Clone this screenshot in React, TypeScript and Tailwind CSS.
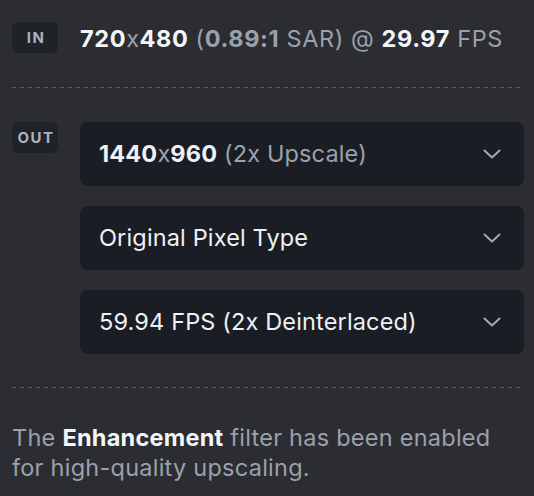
import React from 'react';

const Chevron: React.FC = () => (
    <svg width="18" height="10" viewBox="0 0 18 10" fill="none" className="shrink-0">
        <polyline points="1.5,1.5 9,8.5 16.5,1.5" stroke="#a4a9b2" strokeWidth="2" strokeLinecap="round" strokeLinejoin="round" />
    </svg>
);

const Badge: React.FC<{ label: string }> = ({ label }) => (
    <div className="w-[46px] h-[31px] shrink-0 rounded-md bg-[#1f2329] flex items-center justify-center text-[15px] leading-none font-bold tracking-[0.1em] text-[#a9b3bf] pl-[2px]">
        {label}
    </div>
);

const Divider: React.FC = () => (
    <div className="h-px w-[508px] bg-[linear-gradient(to_right,#5c5f67_50%,transparent_50%)] bg-[length:8px_1px]" />
);

const Select: React.FC<{ children: React.ReactNode }> = ({ children }) => (
    <div className="h-[64px] rounded-lg bg-[#1b1d24] flex items-center justify-between pl-[19px] pr-[23px] text-[23.5px] leading-none tracking-[0.15px] text-[#eef2f6]">
        <span>{children}</span>
        <Chevron />
    </div>
);

export default function App() {
    return (
        <div className="w-[534px] h-[496px] bg-[#2c2d32] pl-3 pr-[10px] pt-[22px] font-['Inter',sans-serif] antialiased">
            {/* Input */}
            <div className="flex items-center h-[31px]">
                <Badge label="IN" />
                <div className="ml-[22px] text-[23.5px] leading-none tracking-[0.6px] text-[#9aa1ab] pt-[3px] whitespace-nowrap">
                    <span className="font-bold text-[#f3f6f9]">720</span>x<span className="font-bold text-[#f3f6f9]">480</span> (<span className="font-bold">0.89:1</span> SAR) @ <span className="font-bold text-[#f3f6f9]">29.97</span> FPS
                </div>
            </div>

            <div className="mt-[34px]">
                <Divider />
            </div>

            {/* Output */}
            <div className="flex mt-[34px]">
                <Badge label="OUT" />
                <div className="ml-[22px] flex-1 flex flex-col gap-5">
                    <Select>
                        <span className="font-bold">1440</span><span className="text-[#9aa1ab]">x</span><span className="font-bold">960</span> <span className="text-[#9aa1ab]">(2x Upscale)</span>
                    </Select>
                    <Select>Original Pixel Type</Select>
                    <Select>59.94 FPS (2x Deinterlaced)</Select>
                </div>
            </div>

            <div className="mt-[33px]">
                <Divider />
            </div>

            <p className="mt-[35px] pr-6 text-[23.5px] leading-[30px] tracking-[0.25px] text-[#9aa1ab]">
                The <span className="font-bold text-[#f3f6f9]">Enhancement</span> filter has been enabled for high-quality upscaling.
            </p>
        </div>
    );
}
